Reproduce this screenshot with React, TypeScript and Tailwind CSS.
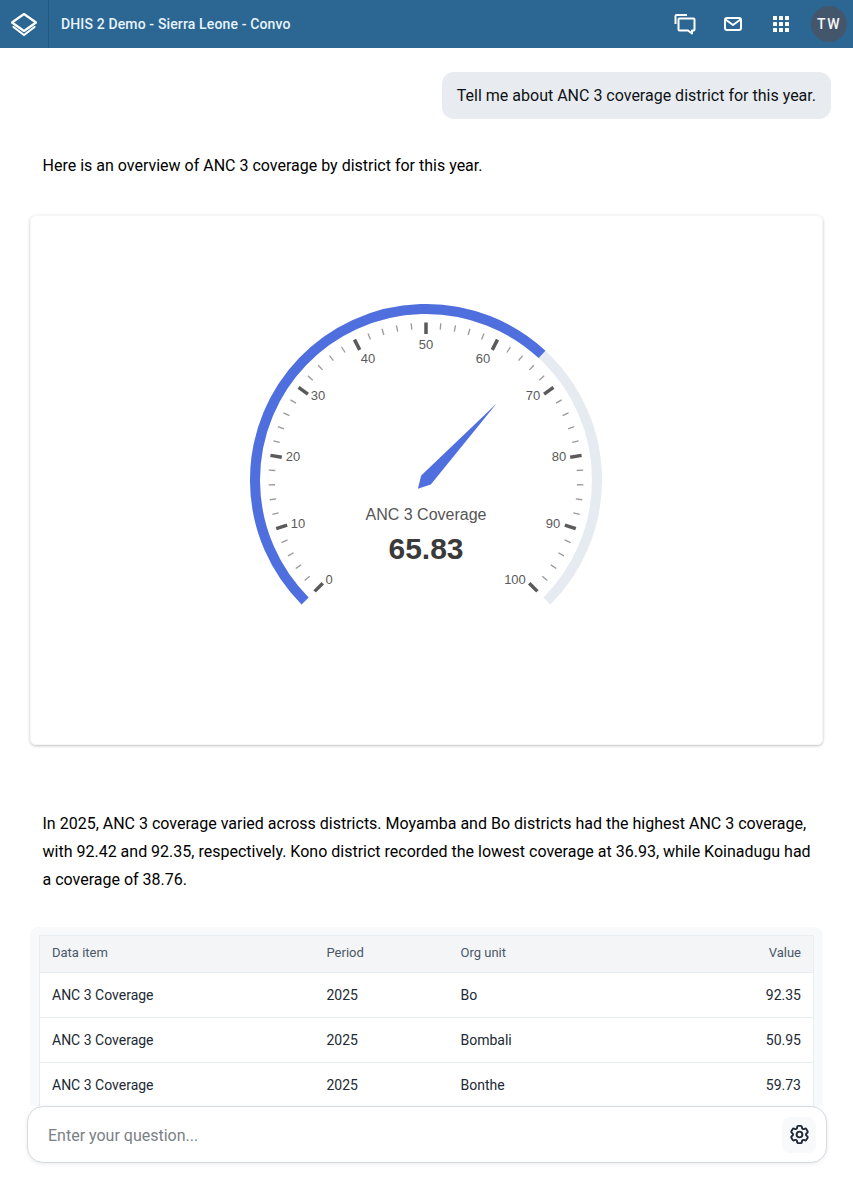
import React from 'react';
import { HiOutlineCog6Tooth } from 'react-icons/hi2';

const rows = [
    ['ANC 3 Coverage', '2025', 'Bo', '92.35'],
    ['ANC 3 Coverage', '2025', 'Bombali', '50.95'],
    ['ANC 3 Coverage', '2025', 'Bonthe', '59.73'],
];

// gauge geometry, in card coordinates
const CX = 396;
const CY = 265;
const R = 171;
const VALUE = 65.83;

// label centres sit off the circle, the chart aligns them by side
const gaugeLabels: [number, number, number][] = [
    [0, 299, 364],
    [10, 268, 308],
    [20, 263, 241],
    [30, 288, 180],
    [40, 338, 143],
    [50, 396, 129],
    [60, 453, 143],
    [70, 503, 180],
    [80, 529, 241],
    [90, 523, 308],
    [100, 485, 364],
];

const polar = (r: number, deg: number) => {
    const a = (deg * Math.PI) / 180;
    return [CX + r * Math.cos(a), CY - r * Math.sin(a)];
};
const toAngle = (v: number) => 225 - v * 2.7;

const arc = (from: number, to: number) => {
    const [x1, y1] = polar(R, toAngle(from));
    const [x2, y2] = polar(R, toAngle(to));
    const large = (to - from) * 2.7 > 180 ? 1 : 0;
    return `M${x1} ${y1}A${R} ${R} 0 ${large} 1 ${x2} ${y2}`;
};

const Gauge = () => {
    const ticks = [];
    for (let v = 0; v <= 100; v += 2) {
        const major = v % 10 === 0;
        const [x1, y1] = polar(157.5, toAngle(v));
        const [x2, y2] = polar(major ? 146 : 151, toAngle(v));
        ticks.push(
            <line
                key={v}
                x1={x1}
                y1={y1}
                x2={x2}
                y2={y2}
                stroke={major ? '#5a5a5a' : '#999'}
                strokeWidth={major ? 3.5 : 1.3}
            />
        );
    }
    const a = toAngle(VALUE);
    const tip = polar(104, a);
    const s1 = polar(6.5, a - 90);
    const s2 = polar(6.5, a + 90);
    const back = polar(12, a + 180);

    return (
        <svg viewBox="0 0 792 530" className="block h-[530px] w-[792px] font-['Liberation_Sans',sans-serif]">
            <path d={arc(0, 100)} fill="none" stroke="#e6ebf1" strokeWidth="10" />
            <path d={arc(0, VALUE)} fill="none" stroke="#4f6fdf" strokeWidth="10" />
            {ticks}
            {gaugeLabels.map(([v, x, y]) => (
                <text key={v} x={x} y={y} textAnchor="middle" dominantBaseline="central" fontSize="13" fill="#5a5a5a">
                    {v}
                </text>
            ))}
            <polygon points={[tip, s1, back, s2].map((p) => p.join(',')).join(' ')} fill="#4f6fdf" />
            <text x={CX} y={305} textAnchor="middle" fontSize="16" fill="#555">
                ANC 3 Coverage
            </text>
            <text x={CX} y={344} textAnchor="middle" fontSize="30" fontWeight="700" fill="#3a3a3a">
                65.83
            </text>
        </svg>
    );
};

const Header = () => (
    <header className="flex h-12 shrink-0 items-center bg-[#2c6693] text-white">
        <div className="flex h-12 w-[49px] shrink-0 items-center justify-center border-r border-[#245a84]">
            <svg width="28" height="28" viewBox="0 0 28 28" fill="none" stroke="#fff" strokeWidth="2.2" strokeLinejoin="round" strokeLinecap="round">
                <path d="M14 4 26 12.5 14 21 2 12.5Z" />
                <path d="M3.5 17 14 25 24.5 17" />
            </svg>
        </div>
        <div className="ml-3 text-sm font-medium tracking-[0.14px] text-[#e8f4fc]">DHIS 2 Demo - Sierra Leone - Convo</div>
        <div className="ml-auto flex items-center">
            <svg width="24" height="24" viewBox="0 0 24 24" fill="none" stroke="#fff" strokeWidth="2" strokeLinejoin="round" className="mr-[24px]">
                <path d="M2.5 12V4a1 1 0 0 1 1-1H14" />
                <path d="M6.5 6.5h14a1 1 0 0 1 1 1v10a1 1 0 0 1-1 1H19v3l-4-3H6.5a1 1 0 0 1-1-1v-10a1 1 0 0 1 1-1Z" />
            </svg>
            <svg width="24" height="24" viewBox="0 0 24 24" fill="none" stroke="#fff" strokeWidth="2" strokeLinejoin="round" className="mr-[24px]">
                <rect x="4" y="6" width="16" height="12" rx="2" />
                <path d="M4.5 7.5 12 13l7.5-5.5" />
            </svg>
            <svg width="24" height="24" viewBox="0 0 24 24" fill="#fff" className="mr-[18px]">
                <rect x="4" y="4" width="4" height="4" rx=".5" />
                <rect x="10" y="4" width="4" height="4" rx=".5" />
                <rect x="16" y="4" width="4" height="4" rx=".5" />
                <rect x="4" y="10" width="4" height="4" rx=".5" />
                <rect x="10" y="10" width="4" height="4" rx=".5" />
                <rect x="16" y="10" width="4" height="4" rx=".5" />
                <rect x="4" y="16" width="4" height="4" rx=".5" />
                <rect x="10" y="16" width="4" height="4" rx=".5" />
                <rect x="16" y="16" width="4" height="4" rx=".5" />
            </svg>
            <div className="mr-[6px] flex h-9 w-9 items-center justify-center rounded-full bg-[#44566c] text-sm font-medium tracking-[1.5px] text-[#f4f6f8]">
                TW
            </div>
        </div>
    </header>
);

const DataTable = () => (
    <div className="mx-[30px] mt-[33px] rounded-t-lg bg-[#f8f9fa] px-[9px] pt-2">
        <table className="w-full table-fixed border-collapse border border-b-0 border-[#e8edf2] bg-white text-sm text-[#212934]">
            <thead>
                <tr className="h-[37px] bg-[#f3f5f7] text-left text-[13px] text-[#4a5768]">
                    <th className="w-[275px] pb-0.5 pl-3 font-normal">Data item</th>
                    <th className="w-[134px] pb-0.5 pl-3 font-normal">Period</th>
                    <th className="pb-0.5 pl-3 font-normal">Org unit</th>
                    <th className="pb-0.5 pr-3 text-right font-normal">Value</th>
                </tr>
            </thead>
            <tbody>
                {rows.map((r) => (
                    <tr key={r[2]} className="h-[45px] border-t border-[#e8edf2]">
                        <td className="pl-3">{r[0]}</td>
                        <td className="pl-3">{r[1]}</td>
                        <td className="pl-3">{r[2]}</td>
                        <td className="pr-3 text-right">{r[3]}</td>
                    </tr>
                ))}
            </tbody>
        </table>
    </div>
);

export default function App() {
    return (
        <div className="flex h-[1193px] w-[853px] flex-col overflow-hidden bg-white font-['Roboto',sans-serif] text-black">
            <Header />
            <main className="min-h-0 flex-1 overflow-hidden">
                <div className="mr-[22px] mt-6 flex justify-end">
                    <div className="rounded-xl bg-[#e8ecf0] px-[15px] py-[10px] text-base leading-[27px] text-[#0e1116]">
                        Tell me about ANC 3 coverage district for this year.
                    </div>
                </div>
                <p className="ml-[42.5px] mr-[40px] mt-[33px] text-base leading-7">
                    Here is an overview of ANC 3 coverage by district for this year.
                </p>
                <div className="mx-[30px] mt-[35px] h-[530px] rounded-md bg-white shadow-[inset_0_0_0_1px_#f5f6f8,0_1px_3px_rgba(0,0,0,0.25)]">
                    <Gauge />
                </div>
                <p className="ml-[42.5px] mr-[40px] mt-[65px] text-base leading-7">
                    In 2025, ANC 3 coverage varied across districts. Moyamba and Bo districts had the highest ANC 3 coverage,
                    with 92.42 and 92.35, respectively. Kono district recorded the lowest coverage at 36.93, while Koinadugu had
                    a coverage of 38.76.
                </p>
                <DataTable />
            </main>
            <div className="h-[87px] shrink-0 bg-white">
                <div className="ml-[27px] flex h-[57px] w-[800px] items-center rounded-2xl border border-[#d5dbe3] bg-white pl-5 pr-[10px] shadow-[0_1px_4px_rgba(0,0,0,0.08)]">
                    <span className="flex-1 pt-[3px] text-base text-[#7b7f86]">Enter your question...</span>
                    <div className="flex h-9 w-[34px] items-center justify-center rounded-lg bg-[#f8f9fb] text-[#1f2937]">
                        <HiOutlineCog6Tooth size={23} strokeWidth={2} />
                    </div>
                </div>
            </div>
        </div>
    );
}
